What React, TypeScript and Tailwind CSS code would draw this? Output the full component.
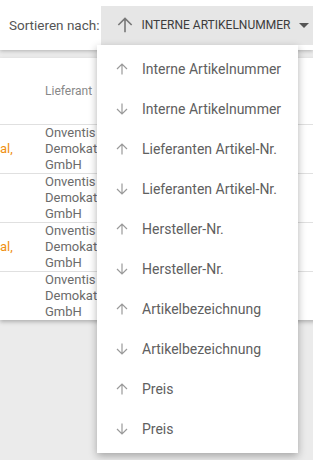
import React from 'react';

const options = [
  { label: 'Interne Artikelnummer', dir: 'up' },
  { label: 'Interne Artikelnummer', dir: 'down' },
  { label: 'Lieferanten Artikel-Nr.', dir: 'up' },
  { label: 'Lieferanten Artikel-Nr.', dir: 'down' },
  { label: 'Hersteller-Nr.', dir: 'up' },
  { label: 'Hersteller-Nr.', dir: 'down' },
  { label: 'Artikelbezeichnung', dir: 'up' },
  { label: 'Artikelbezeichnung', dir: 'down' },
  { label: 'Preis', dir: 'up' },
  { label: 'Preis', dir: 'down' },
];

const rows = [{ orange: true }, { orange: false }, { orange: true }, { orange: false }];

function Arrow({ dir, size, color, width }: { dir: string; size: number; color: string; width: number }) {
  return (
    <svg width={size} height={size} viewBox="0 0 12 12" fill="none" stroke={color} strokeWidth={width}>
      {dir === 'up' ? (
        <path d="M6 11.5V1M1 6l5-5 5 5" />
      ) : (
        <path d="M6 0.5V11M1 6l5 5 5-5" />
      )}
    </svg>
  );
}

export default function App() {
  return (
    <div className="relative w-[313px] h-[460px] overflow-hidden bg-[#ebebeb] font-['Roboto',sans-serif]">
      <div className="relative z-10 h-[50px] bg-white flex items-center shadow-[0_1px_4px_rgba(0,0,0,0.25)]">
        <span className="pl-[9px] text-[13.5px] text-[#555] whitespace-nowrap">Sortieren nach:</span>
        <div className="ml-[2px] h-[39px] w-[230px] shrink-0 bg-[#e6e6e6] flex items-center pl-[16px]">
          <Arrow dir="up" size={16} color="#777" width={1.2} />
          <span className="ml-[8px] text-[12px] text-[#3c3c3c] whitespace-nowrap">
            INTERNE ARTIKELNUMMER
          </span>
          <svg className="ml-[9px]" width="10" height="5" viewBox="0 0 10 5">
            <path d="M0 0h10L5 5z" fill="#555" />
          </svg>
        </div>
      </div>

      <div className="mt-[8px] w-[330px] bg-white shadow-[0_2px_4px_rgba(0,0,0,0.25)]">
        <div className="h-[66px] flex items-center pl-[45px] text-[12px] text-[#888]">Lieferant</div>
        {rows.map((r, i) => (
          <div key={i} className="h-[49px] border-t border-[#e0e0e0] flex text-[13px] leading-[16px]">
            <div className="w-[45px] shrink-0 pt-[16px] text-[#f0900f]">{r.orange ? 'al,' : ''}</div>
            <div className="text-[#6b6b6b]">
              <div>Onventis</div>
              <div>Demokat</div>
              <div>GmbH</div>
            </div>
          </div>
        ))}
      </div>

      <div className="absolute left-[97px] top-[45px] w-[201px] z-20 bg-white py-[4px] shadow-[0_3px_8px_rgba(0,0,0,0.3)]">
        {options.map((o, i) => (
          <div key={i} className="h-[40px] flex items-center pl-[19px]">
            <Arrow dir={o.dir} size={12} color="#9a9a9a" width={1.2} />
            <span className="ml-[14px] text-[14px] text-[#606060] whitespace-nowrap">{o.label}</span>
          </div>
        ))}
      </div>
    </div>
  );
}
